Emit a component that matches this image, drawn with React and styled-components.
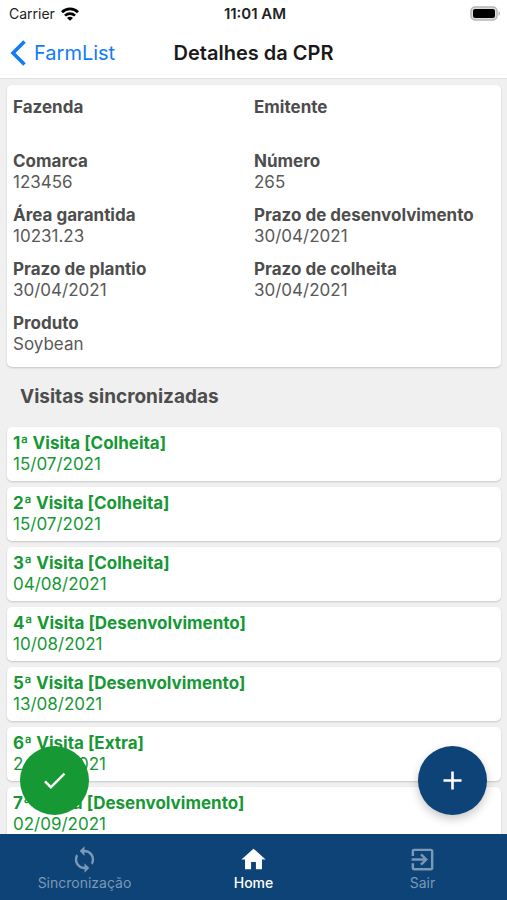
import React from 'react';
import styled, { createGlobalStyle } from 'styled-components';
import { MdSync, MdHome, MdExitToApp, MdCheck, MdAdd } from 'react-icons/md';

const GlobalStyle = createGlobalStyle`
    * {
        box-sizing: border-box;
    }

    body {
        margin: 0;
        font-family: Inter, "Liberation Sans", sans-serif;
        background: #f0f0f0;
    }
`;

const Screen = styled.div`
    display: flex;
    flex-direction: column;
    height: 100vh;
    overflow: hidden;
`;

const TopBar = styled.header`
    flex-shrink: 0;
    background: #fff;
    border-bottom: 1px solid #e2e2e2;
`;

const StatusBar = styled.div`
    display: grid;
    grid-template-columns: 1fr auto 1fr;
    align-items: center;
    height: 27px;
    padding: 0 6px 0 9px;
    font-size: 14px;
    line-height: 18px;
    color: #222;
`;

const Carrier = styled.div`
    display: flex;
    align-items: center;
    gap: 6px;
`;

const Clock = styled.span`
    font-size: 15px;
    font-weight: 600;
`;

const BatteryIcon = styled.svg`
    justify-self: end;
`;

const NavBar = styled.nav`
    display: grid;
    grid-template-columns: 1fr auto 1fr;
    align-items: center;
    height: 51px;
    padding: 0 10px;
`;

const BackLink = styled.a`
    display: flex;
    align-items: center;
    gap: 8px;
    font-size: 20px;
    line-height: 24px;
    color: #127cf7;
    text-decoration: none;
`;

const Title = styled.h1`
    margin: 0;
    font-size: 20px;
    line-height: 24px;
    font-weight: 600;
    color: #1a1a1a;
`;

const Body = styled.div`
    position: relative;
    flex: 1;
    min-height: 0;
`;

const Content = styled.main`
    height: 100%;
    padding: 6px 6px 0 7px;
    overflow-y: auto;
    scrollbar-width: none;
`;

const Card = styled.div`
    padding: 6px;
    background: #fff;
    border-radius: 5px;
    box-shadow: 0 1px 2px rgba(0, 0, 0, 0.18);
    font-size: 17px;
    line-height: 21px;
`;

const Details = styled.dl`
    display: grid;
    grid-template-columns: 1fr 1fr;
    margin: 0;
`;

const Field = styled.div`
    padding: 6px 0;
    color: #4d4d4d;
`;

const Label = styled.dt`
    font-weight: 700;
`;

const Value = styled.dd`
    min-height: 21px;
    margin: 0;
    color: #595959;
`;

const SectionTitle = styled.h2`
    margin: 0;
    padding: 18px 13px;
    font-size: 19px;
    line-height: 24px;
    font-weight: 700;
    color: #4d4d4d;
`;

const VisitList = styled.ul`
    display: flex;
    flex-direction: column;
    gap: 6px;
    margin: 0;
    padding: 0 0 6px;
    list-style: none;
`;

const Visit = styled(Card).attrs({ as: 'li' })`
    color: #169834;
`;

const VisitName = styled.div`
    font-weight: 700;
`;

const Fab = styled.button`
    position: absolute;
    bottom: 19px;
    ${props => props.$side}: 20px;
    display: flex;
    align-items: center;
    justify-content: center;
    width: 69px;
    height: 69px;
    padding: 0;
    border: 0;
    border-radius: 50%;
    color: #fff;
    background: ${props => props.$color};
    box-shadow: ${props => props.$raised ? '0 4px 10px rgba(0, 0, 0, 0.22)' : 'none'};
    cursor: pointer;
`;

const TabBar = styled.nav`
    display: grid;
    grid-template-columns: repeat(3, 1fr);
    flex-shrink: 0;
    height: 66px;
    background: #0d4377;
`;

const Tab = styled.button`
    display: flex;
    flex-direction: column;
    align-items: center;
    justify-content: center;
    padding: 2px 0 0;
    border: 0;
    background: none;
    font-family: inherit;
    font-size: 14px;
    line-height: 18px;
    font-weight: ${props => props.$active ? 500 : 400};
    color: ${props => props.$active ? '#fff' : '#7b98b5'};
    cursor: pointer;
`;

const details = [
    { label: 'Fazenda', value: '' },
    { label: 'Emitente', value: '' },
    { label: 'Comarca', value: '123456' },
    { label: 'Número', value: '265' },
    { label: 'Área garantida', value: '10231.23' },
    { label: 'Prazo de desenvolvimento', value: '30/04/2021' },
    { label: 'Prazo de plantio', value: '30/04/2021' },
    { label: 'Prazo de colheita', value: '30/04/2021' },
    { label: 'Produto', value: 'Soybean' },
];

const visits = [
    { type: 'Colheita', date: '15/07/2021' },
    { type: 'Colheita', date: '15/07/2021' },
    { type: 'Colheita', date: '04/08/2021' },
    { type: 'Desenvolvimento', date: '10/08/2021' },
    { type: 'Desenvolvimento', date: '13/08/2021' },
    { type: 'Extra', date: '24/08/2021' },
    { type: 'Desenvolvimento', date: '02/09/2021' },
];

const tabs = [
    { label: 'Sincronização', Icon: MdSync },
    { label: 'Home', Icon: MdHome, active: true },
    { label: 'Sair', Icon: MdExitToApp },
];

function Wifi() {
    return (
        <svg width="18" height="14" viewBox="0 0 18 14" fill="none" stroke="#000" strokeWidth="2.7" aria-hidden="true">
            <path d="M1 5.2a11.4 11.4 0 0 1 16 0" />
            <path d="M4 8.6a7.2 7.2 0 0 1 10 0" />
            <path d="M9 13.8L6 10.9a4.2 4.2 0 0 1 6 0z" fill="#000" stroke="none" />
        </svg>
    );
}

function Battery() {
    return (
        <BatteryIcon width="31" height="15" viewBox="0 0 31 15" aria-hidden="true">
            <rect x="1" y="1" width="26" height="13" rx="4" fill="#ddd" stroke="#b5b5b5" strokeWidth="1.5" />
            <rect x="3" y="3" width="22" height="9" rx="2" fill="#000" />
            <path d="M28.5 5.2c2 .8 2 3.8 0 4.6z" fill="#b5b5b5" />
        </BatteryIcon>
    );
}

function App() {
    return (
        <Screen>
            <GlobalStyle />
            <TopBar>
                <StatusBar>
                    <Carrier>Carrier <Wifi /></Carrier>
                    <Clock>11:01 AM</Clock>
                    <Battery />
                </StatusBar>
                <NavBar>
                    <BackLink href="#farmlist">
                        <svg width="16" height="26" viewBox="0 0 16 26" fill="none" stroke="currentColor" strokeWidth="3.6" aria-hidden="true">
                            <path d="M14.5 1.5L3 13l11.5 11.5" />
                        </svg>
                        FarmList
                    </BackLink>
                    <Title>Detalhes da CPR</Title>
                </NavBar>
            </TopBar>
            <Body>
                <Content>
                    <Card>
                        <Details>
                            {details.map(item => (
                                <Field key={item.label}>
                                    <Label>{item.label}</Label>
                                    <Value>{item.value}</Value>
                                </Field>
                            ))}
                        </Details>
                    </Card>
                    <SectionTitle>Visitas sincronizadas</SectionTitle>
                    <VisitList>
                        {visits.map((visit, index) => (
                            <Visit key={index}>
                                <VisitName>{`${index + 1}ª Visita [${visit.type}]`}</VisitName>
                                <div>{visit.date}</div>
                            </Visit>
                        ))}
                    </VisitList>
                </Content>
                <Fab type="button" $side="left" $color="#169834" aria-label="Confirmar">
                    <MdCheck size={29} />
                </Fab>
                <Fab type="button" $side="right" $color="#0d4377" $raised aria-label="Adicionar">
                    <MdAdd size={31} />
                </Fab>
            </Body>
            <TabBar>
                {tabs.map(({ label, Icon, active }) => (
                    <Tab key={label} type="button" $active={active}>
                        <Icon size={29} />
                        {label}
                    </Tab>
                ))}
            </TabBar>
        </Screen>
    );
}

export default App;
